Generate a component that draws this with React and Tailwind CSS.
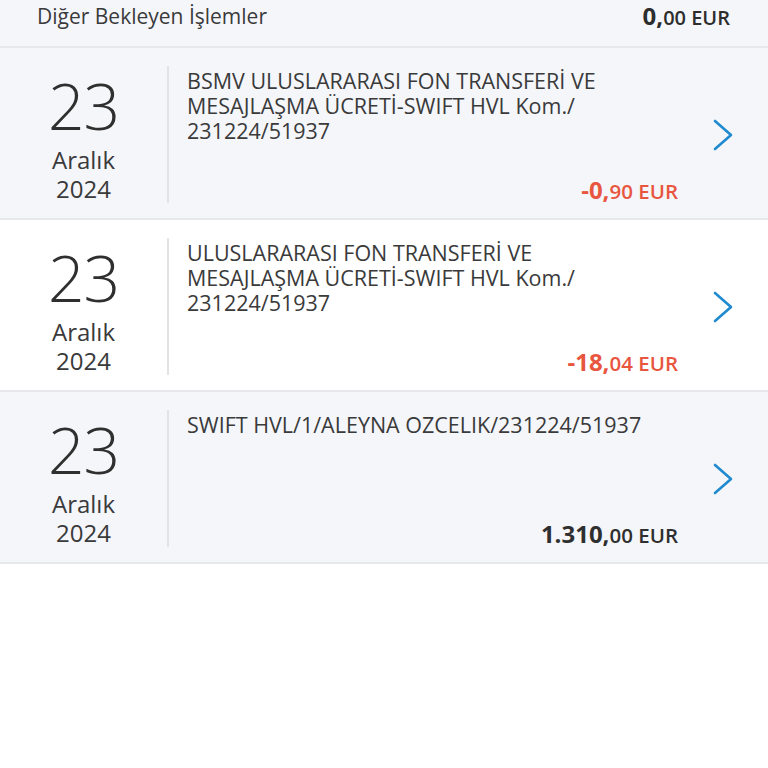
import React from "react";

const rows = [
  {
    day: "23",
    month: "Aralık",
    year: "2024",
    lines: ["BSMV ULUSLARARASI FON TRANSFERİ VE", "MESAJLAŞMA ÜCRETİ-SWIFT HVL Kom./", "231224/51937"],
    whole: "-0,",
    cents: "90",
    negative: true,
    bg: "bg-[#f5f6fa]",
  },
  {
    day: "23",
    month: "Aralık",
    year: "2024",
    lines: ["ULUSLARARASI FON TRANSFERİ VE", "MESAJLAŞMA ÜCRETİ-SWIFT HVL Kom./", "231224/51937"],
    whole: "-18,",
    cents: "04",
    negative: true,
    bg: "bg-white",
  },
  {
    day: "23",
    month: "Aralık",
    year: "2024",
    lines: ["SWIFT HVL/1/ALEYNA OZCELIK/231224/51937"],
    whole: "1.310,",
    cents: "00",
    negative: false,
    bg: "bg-[#f5f6fa]",
  },
];

const Chevron = () => (
  <svg width="22" height="34" viewBox="0 0 22 34" fill="none">
    <path
      d="M3 3 L19 17 L3 31"
      stroke="#1f8ad0"
      strokeWidth="2.6"
      strokeLinecap="round"
      strokeLinejoin="round"
    />
  </svg>
);

const TransactionRow = ({ item }) => {
  return (
    <div className={`flex h-[172px] border-b-2 border-[#e6e8ec] ${item.bg}`}>
      {/* tarih */}
      <div className="w-[167px] flex flex-col items-center pt-[23px] text-[#2f2f2f]">
        <div className="text-[64px] leading-[70px] font-light tracking-[-1px]">{item.day}</div>
        <div className="mt-[4px] text-[24px] leading-[29px] text-[#3a3a3a]">{item.month}</div>
        <div className="text-[24px] leading-[29px] text-[#3a3a3a]">{item.year}</div>
      </div>

      <div className="w-[2px] bg-[#e1e3e7] mt-[18px] mb-[15px]" />

      {/* açıklama + tutar */}
      <div className="w-[509px] flex flex-col pl-[18px] pt-[20px] pb-[13px]">
        <div className="text-[21.5px] leading-[25px] text-[#3a3a3a] whitespace-nowrap">
          {item.lines.map((l, i) => (
            <div key={i}>{l}</div>
          ))}
        </div>
        <div
          className={`mt-auto text-right font-bold ${
            item.negative ? "text-[#e8563f]" : "text-[#2f2f2f]"
          }`}
        >
          <span className="text-[24px] leading-[28px]">{item.whole}</span>
          <span className="text-[20.5px] leading-[28px] font-semibold">{item.cents} EUR</span>
        </div>
      </div>

      <div className="flex-1 flex items-center pl-[34px] pt-[3px]">
        <Chevron />
      </div>
    </div>
  );
};

export default function App() {
  return (
    <div
      className="w-[768px] min-h-[768px] bg-white"
      style={{ fontFamily: '"Open Sans", "Noto Sans", sans-serif' }}
    >
      <div className="h-[48px] flex items-start justify-between bg-[#f5f6fa] border-b-2 border-[#e6e8ec] pl-[37px] pr-[38px] pt-[3px]">
        <span className="text-[21px] leading-[26px] text-[#3a3a3a]">
          Diğer Bekleyen İşlemler
        </span>
        <span className="font-bold text-[#2d2d2d]">
          <span className="text-[24px] leading-[26px]">0,</span>
          <span className="text-[20px] leading-[26px] font-semibold">00 EUR</span>
        </span>
      </div>

      {rows.map((r, i) => (
        <TransactionRow key={i} item={r} />
      ))}
    </div>
  );
}
